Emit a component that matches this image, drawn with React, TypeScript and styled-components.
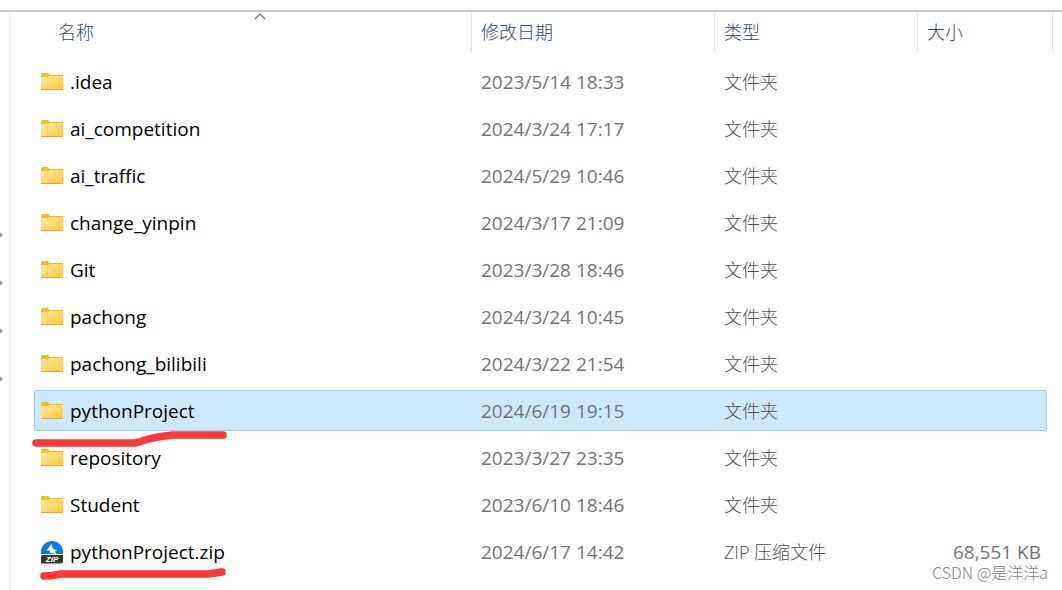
import React from 'react';
import styled, { createGlobalStyle, css } from 'styled-components';

const GlobalStyle = createGlobalStyle`
  * { box-sizing: border-box; }
  body {
    margin: 0;
    background: #fff;
    font-family: "Open Sans", "Noto Sans CJK SC", sans-serif;
    font-size: 18px;
    line-height: 24px;
    color: #000;
  }
`;

const Window = styled.div`
  position: relative;
  min-height: 100vh;
  display: flex;
  flex-direction: column;
  padding-top: 10px;
  overflow: hidden;
`;

const Body = styled.div`
  flex: 1;
  display: flex;
  border-top: 2px solid #cbc7c3;
`;

const NavEdge = styled.aside`
  width: 11px;
  border-right: 2px solid #f6f6f6;
  padding-top: 220px;
  display: flex;
  flex-direction: column;
  gap: 42px;
`;

const PinTip = styled.svg`
  display: block;
  width: 4px;
  height: 6px;
`;

const Pane = styled.main`
  flex: 1;
  min-width: 0;
  padding: 0 9px 0 23px;
`;

const FileTable = styled.table`
  display: block;
`;

const Head = styled.thead`
  display: block;
`;

const HeadRow = styled.tr`
  display: grid;
  grid-template-columns: minmax(0, 1fr) 243px 203px 136px;
  height: 40px;
`;

const HeadCell = styled.th<{ $first?: boolean; $last?: boolean }>`
  position: relative;
  padding: 0;
  font-weight: 300;
  margin-left: ${(p) => (p.$first ? '15px' : '0')};
  border-left: ${(p) => (p.$first ? '0' : '1px solid #e5e5e5')};
  border-right: ${(p) => (p.$last ? '1px solid #e5e5e5' : '0')};
`;

const SortButton = styled.button`
  display: block;
  width: 100%;
  height: 40px;
  padding: 0 9px;
  border: 0;
  background: none;
  font: inherit;
  text-align: left;
  color: #34496a;
`;

const SortMark = styled.svg`
  position: absolute;
  top: 1px;
  left: calc(50% - 6px);
  width: 12px;
  height: 7px;
`;

const Files = styled.tbody`
  display: flex;
  flex-direction: column;
  gap: 6px;
  padding-top: 9px;
`;

const FileRow = styled.tr<{ $selected?: boolean }>`
  display: grid;
  grid-template-columns: minmax(0, 1fr) 243px 203px 130px;
  align-items: center;
  position: relative;
  height: 41px;
  margin-right: 6px;
  border-radius: 2px;
  ${(p) =>
    p.$selected &&
    css`
      background: #cce8ff;
      box-shadow: inset 0 0 0 1px #99d1ff;
    `}
`;

const NameCell = styled.td`
  display: flex;
  align-items: center;
  gap: 6px;
  padding: 0 0 0 6px;
  font-size: 19px;
`;

const InfoCell = styled.td<{ $kind?: 'text' | 'size' }>`
  padding: 0 6px 0 10px;
  color: ${(p) => (p.$kind === 'text' ? '#505050' : '#737373')};
  font-weight: ${(p) => (p.$kind === 'text' ? 300 : 400)};
  font-size: ${(p) => (p.$kind === 'text' ? '18px' : '19px')};
  text-align: ${(p) => (p.$kind === 'size' ? 'right' : 'left')};
`;

const Icon = styled.svg`
  flex: none;
  width: 24px;
  height: 24px;
`;

const Marker = styled.svg`
  position: absolute;
  left: -2px;
  top: 40px;
  width: 196px;
  height: 20px;
  z-index: 1;
  pointer-events: none;
`;

const Watermark = styled.div`
  position: absolute;
  right: 14px;
  bottom: 9px;
  font-family: "Noto Sans CJK SC", sans-serif;
  font-size: 16px;
  font-weight: 300;
  line-height: 18px;
  color: #808080;
`;

const FolderIcon = () => (
  <Icon viewBox="0 0 24 24" aria-hidden="true">
    <defs>
      <linearGradient id="folder" x1="0" y1="0" x2="1" y2="1">
        <stop offset="0" stopColor="#ffe79d" />
        <stop offset="1" stopColor="#ffc937" />
      </linearGradient>
    </defs>
    <path d="M1 4.5Q1 3 2.5 3H8L9.5 5H23V9H1Z" fill="#fab81e" />
    <path d="M1 7H8L9.500 6H23V20H1Z" fill="url(#folder)" />
    <path d="M1 19H23V19.500Q23 20 22.500 20H1.500Q1 20 1 19.500Z" fill="#eba826" />
  </Icon>
);

const ZipIcon = () => (
  <Icon viewBox="0 0 24 24" aria-hidden="true">
    <path d="M1 14V12A11 11 0 0 1 23 12V14Z" fill="#0a7be0" />
    <path d="M11.500 4L6.500 10.500L10.500 10.800L9.500 12.500L16 14L15 11.300L17.500 10.500L12.500 8.500Z" fill="#fff" />
    <path d="M3 15H23V21Q23 23.500 20.500 23.500H1V17Q1 15 3 15Z" fill="#333" />
    <text x="12" y="22" textAnchor="middle" fontFamily="Liberation Sans, sans-serif" fontSize="8" fontWeight="700" fontStyle="italic" fill="#fff">
      ZIP
    </text>
  </Icon>
);

type Entry = {
  name: string;
  date: string;
  type: string;
  size?: string;
  selected?: boolean;
  stroke?: string;
};

const folder = (name: string, date: string): Entry => ({ name, date, type: '文件夹' });

const entries: Entry[] = [
  folder('.idea', '2023/5/14 18:33'),
  folder('ai_competition', '2024/3/24 17:17'),
  folder('ai_traffic', '2024/5/29 10:46'),
  folder('change_yinpin', '2024/3/17 21:09'),
  folder('Git', '2023/3/28 18:46'),
  folder('pachong', '2024/3/24 10:45'),
  folder('pachong_bilibili', '2024/3/22 21:54'),
  {
    ...folder('pythonProject', '2024/6/19 19:15'),
    selected: true,
    stroke: 'M4 13H103Q108 12 113 10Q128 6 141 5H191',
  },
  folder('repository', '2023/3/27 23:35'),
  folder('Student', '2023/6/10 18:46'),
  {
    name: 'pythonProject.zip',
    date: '2024/6/17 14:42',
    type: 'ZIP 压缩文件',
    size: '68,551 KB',
    stroke: 'M12 5Q20 5 29 3H176Q184 2 190 1',
  },
];

const headings = ['名称', '修改日期', '类型', '大小'];

export default function App() {
  return (
    <Window>
      <GlobalStyle />
      <Body>
        <NavEdge aria-hidden="true">
          {[0, 1, 2, 3].map((n) => (
            <PinTip key={n} viewBox="0 0 4 6">
              <path d="M0 .5L2.500 2V4L0 5.500Z" fill="#8d9aa8" />
            </PinTip>
          ))}
        </NavEdge>
        <Pane>
          <FileTable>
            <Head>
              <HeadRow>
                {headings.map((label, i) => (
                  <HeadCell key={label} scope="col" $first={i === 0} $last={i === 3}>
                    <SortButton type="button">{label}</SortButton>
                    {i === 0 && (
                      <SortMark viewBox="0 0 12 7" aria-hidden="true">
                        <path d="M1 6L6 1L11 6" fill="none" stroke="#6a6a6a" strokeWidth="1.200" />
                      </SortMark>
                    )}
                  </HeadCell>
                ))}
              </HeadRow>
            </Head>
            <Files>
              {entries.map((e) => (
                <FileRow key={e.name} $selected={e.selected}>
                  <NameCell>
                    {e.size ? <ZipIcon /> : <FolderIcon />}
                    {e.name}
                    {e.stroke && (
                      <Marker viewBox="0 0 196 20" overflow="visible" aria-hidden="true">
                        <path d={e.stroke} fill="none" stroke="#fd3838" strokeWidth="7.500" strokeLinecap="round" strokeLinejoin="round" />
                      </Marker>
                    )}
                  </NameCell>
                  <InfoCell>{e.date}</InfoCell>
                  <InfoCell $kind="text">{e.type}</InfoCell>
                  <InfoCell $kind="size">{e.size}</InfoCell>
                </FileRow>
              ))}
            </Files>
          </FileTable>
        </Pane>
      </Body>
      <Watermark>CSDN @是洋洋a</Watermark>
    </Window>
  );
}
